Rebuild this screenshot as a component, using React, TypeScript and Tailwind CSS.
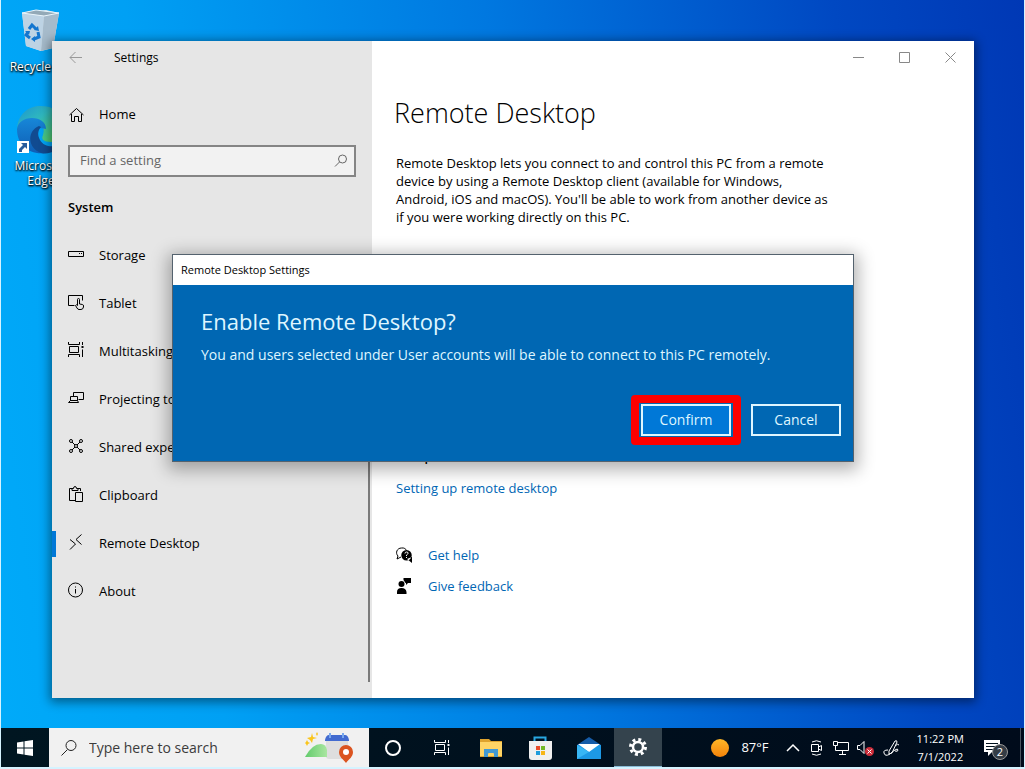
import { useState } from "react";
import type { ReactNode } from "react";

const sidebarItems = [
  { name: "Storage", icon: <StorageIcon /> },
  { name: "Tablet", icon: <TabletIcon /> },
  { name: "Multitasking", icon: <TaskViewIcon /> },
  { name: "Projecting to this PC", icon: <ProjectIcon /> },
  { name: "Shared experiences", icon: <ShareIcon /> },
  { name: "Clipboard", icon: <ClipboardIcon /> },
  { name: "Remote Desktop", icon: <RemoteIcon /> },
  { name: "About", icon: <AboutIcon /> },
];

function LineIcon({ children }: { children: ReactNode }) {
  return (
    <svg
      className="w-4 h-4 shrink-0"
      viewBox="0 0 16 16"
      fill="none"
      stroke="currentColor"
      aria-hidden="true"
    >
      {children}
    </svg>
  );
}

function StorageIcon() {
  return (
    <LineIcon>
      <path d="M.5 5.500h15v5H.5zM11 7.500h1M13 7.500h1" />
    </LineIcon>
  );
}

function TabletIcon() {
  return (
    <LineIcon>
      <path d="M6.500 11.500h-6v-10h14v5" />
      <path d="M9.500 11V5.500a1 1 0 0 1 2 0V10l3 .5q1 .2 1 1.500v1q-.5 2.500-2.500 2.500h-2q-1.200 0-2-1.500l-1.500-2.500q.8-1.500 2 0z" />
    </LineIcon>
  );
}

function TaskViewIcon() {
  return (
    <LineIcon>
      <path d="M1.500 4.500h9v6h-9zM.5 0v2.500h11V0M.5 15v-2.500h11V15M14.500 0v3M14.500 7.500V15" />
      <path d="M13.500 4h2v2h-2z" fill="currentColor" stroke="none" />
    </LineIcon>
  );
}

function ProjectIcon() {
  return (
    <LineIcon>
      <path d="M5.500 6V2.500h10v7h-5M2.500 6.500h7v4h-7zM.5 12.500h10l-1-2h-7z" />
    </LineIcon>
  );
}

function ShareIcon() {
  return (
    <LineIcon>
      <circle cx="8" cy="8" r="1.500" />
      <circle cx="3" cy="3" r="1.500" />
      <circle cx="13" cy="3" r="1.500" />
      <circle cx="3" cy="13" r="1.500" />
      <circle cx="13" cy="13" r="1.500" />
      <path d="m4 4 3 3M12 4 9 7M4 12l3-3M12 12 9 9" />
    </LineIcon>
  );
}

function ClipboardIcon() {
  return (
    <LineIcon>
      <path d="M7 14.500H1.500v-12H4M10 2.500h2.500V5M4 4.500v-2h1.500q0-2 1.500-2t1.500 2H10v2zM7.500 6.500h7v9h-7z" />
    </LineIcon>
  );
}

function RemoteIcon() {
  return (
    <LineIcon>
      <path d="M2 5.500 7.500 10 2 15.500M13.500.5 8 5.500l5.500 5" />
    </LineIcon>
  );
}

function AboutIcon() {
  return (
    <LineIcon>
      <circle cx="7.500" cy="8" r="7" />
      <path d="M7.500 7v4.500M7.500 4.500v1" />
    </LineIcon>
  );
}

function RecycleBinIcon() {
  return (
    <svg className="w-10 h-12" viewBox="0 0 40 48" aria-hidden="true">
      <path d="M1 6 25 3l13 3-6 35-12 3-15-5z" fill="#dce7ef" />
      <path d="m1 6 22 3-3 35-15-5z" fill="#bdd3e4" />
      <path d="m23 9 15-3-6 35-12 3z" fill="#a6bbcb" />
      <path d="m1 6 14-3 23 3-15 3z" fill="#93a9b7" stroke="#e8f4fb" />
      <g fill="none" stroke="#1376cf" strokeWidth="3">
        <path d="m8 22 3-4 4 4M17 25l1 5-5 2M9 31l-4-3 2-3" />
      </g>
      <path d="m13 23 5 1-1-5zM14 29v6l-4-3zM4 24h5l-1 4z" fill="#1376cf" />
    </svg>
  );
}

function EdgeIcon() {
  return (
    <svg className="w-12 h-12" viewBox="0 0 48 48" aria-hidden="true">
      <defs>
        <linearGradient id="edgeTop" x1="0" y1="0" x2="1" y2="1">
          <stop stopColor="#1b93d0" />
          <stop offset=".4" stopColor="#30b9be" />
          <stop offset="1" stopColor="#60d750" />
        </linearGradient>
        <linearGradient id="edgeLeft" x2="0" y2="1">
          <stop stopColor="#1787d8" />
          <stop offset="1" stopColor="#0f5eb5" />
        </linearGradient>
      </defs>
      <path d="M0 23C1 8 11 0 24 0c16 0 24 11 24 23 0 8-6 13-14 13-8 0-10-3-8-7 3-9-3-16-12-16C7 13 2 17 0 23z" fill="url(#edgeTop)" />
      <path d="M0 23c1-7 7-11 15-11 8 0 14 4 14 11-6-2-12 0-13 8-1 7 4 13 12 16C12 49 0 39 0 23z" fill="url(#edgeLeft)" />
      <path d="M22 20c-12 5-12 22 2 27 8 2 16-2 21-9-9 4-18 3-22-4-3-5-2-10 1-13z" fill="#114b91" />
    </svg>
  );
}

function DesktopIcons() {
  return (
    <div className="w-20 text-center text-xs leading-[15px] text-white [text-shadow:1px_1px_2px_#000,0_1px_2px_#000]">
      <a href="#recycle-bin" className="flex flex-col items-center pt-[7px]">
        <RecycleBinIcon />
        <span className="whitespace-nowrap pt-1">Recycle Bin</span>
      </a>
      <a href="#edge" className="relative flex flex-col items-center pt-8">
        <EdgeIcon />
        <svg
          className="absolute left-4 top-[67px] w-3 h-3 bg-white"
          viewBox="0 0 12 12"
          aria-hidden="true"
        >
          <path d="M4 2h6v6L8 6 5 9v2H2V8l4-4z" fill="#285c9b" />
        </svg>
        <span className="pt-1">Microsoft Edge</span>
      </a>
    </div>
  );
}

function Sidebar() {
  const [active, setActive] = useState("Remote Desktop");

  return (
    <aside className="w-80 shrink-0 relative flex flex-col bg-[#e6e6e6] text-black">
      <div className="flex items-center h-[33px] pl-4">
        <button aria-label="Back" className="text-[#999]">
          <svg className="w-4 h-4" viewBox="0 0 16 16" fill="none" stroke="currentColor">
            <path d="M14 7.500H2M7.500 2 2 7.500 7.500 13" />
          </svg>
        </button>
        <span className="pl-[30px] text-xs">Settings</span>
      </div>
      <a href="#home" className="flex items-center gap-[15px] h-12 mt-[17px] pl-4">
        <LineIcon>
          <path d="M1.500 8 8.500 1.500l7 6.500M3.500 7v7.500h3v-5h4v5h3V7" />
        </LineIcon>
        Home
      </a>
      <label className="flex items-center h-8 mx-4 mt-1.5 pl-2.5 pr-1.5 border-2 border-[#858585] bg-[#f2f2f2]">
        <input
          type="text"
          aria-label="Find a setting"
          placeholder="Find a setting"
          className="flex-1 min-w-0 outline-none placeholder:text-[#666]"
        />
        <svg className="w-[14px] h-[14px] text-[#666]" viewBox="0 0 14 14" fill="none" stroke="currentColor">
          <circle cx="8.500" cy="5" r="4" />
          <path d="M5.500 8 1 12.500" />
        </svg>
      </label>
      <h2 className="pl-4 pt-5 leading-5 font-semibold">System</h2>
      <nav className="pt-[15px]">
        {sidebarItems.map((item) => (
          <button
            key={item.name}
            onClick={() => setActive(item.name)}
            className={`w-full h-12 pl-3 flex items-center gap-[15px] border-l-4 text-left ${
              active === item.name
                ? "[border-image:linear-gradient(transparent_25%,#0078d7_25%,#0078d7_75%,transparent_75%)_1]"
                : "border-transparent"
            }`}
          >
            <span className="pb-1">{item.icon}</span>
            {item.name}
          </button>
        ))}
      </nav>
      {/* Scrollbar */}
      <div className="absolute right-0.5 top-60 bottom-4 w-0.5 bg-[#7a7a7a]" />
    </aside>
  );
}

function SettingsContent() {
  return (
    <main className="flex-1 min-w-0 flex flex-col bg-white text-black">
      <div className="flex justify-end h-8 pr-px text-[#888]">
        <button aria-label="Minimize" className="w-[46px] flex items-center justify-center">
          <svg className="w-[11px] h-[11px]" viewBox="0 0 11 11" stroke="currentColor">
            <path d="M0 5.500h11" />
          </svg>
        </button>
        <button aria-label="Maximize" className="w-[46px] flex items-center justify-center">
          <svg className="w-[11px] h-[11px]" viewBox="0 0 11 11" fill="none" stroke="currentColor">
            <path d="M.5.5h10v10H.5z" />
          </svg>
        </button>
        <button aria-label="Close" className="w-[46px] flex items-center justify-center">
          <svg className="w-[11px] h-[11px]" viewBox="0 0 11 11" stroke="currentColor">
            <path d="m.5.5 10 10M10.500.5l-10 10" />
          </svg>
        </button>
      </div>
      <h1 className="pl-[22px] pt-5 text-[27px] leading-10 font-light">Remote Desktop</h1>
      <p className="pl-6 pt-[21px] max-w-[480px] leading-[18px]">
        Remote Desktop lets you connect to and control this PC from a remote
        <br />
        device by using a Remote Desktop client (available for Windows,
        <br />
        Android, iOS and macOS). You'll be able to work from another device as
        <br />
        if you were working directly on this PC.
      </p>
      <h2 className="pl-6 pt-[213px] pb-[11px] text-lg leading-7">
        Help from the web
      </h2>
      <div className="pl-6 flex flex-col items-start text-[#0066b4]">
        <a href="#setup" className="leading-5">
          Setting up remote desktop
        </a>
        <a href="#help" className="flex items-center gap-4 mt-[47px] leading-5">
          <svg className="w-4 h-4" viewBox="0 0 16 16" aria-hidden="true">
            <path d="M5 10 1 12l1-3C-1 6 1 1 5.500 1 8 .5 10 2 10.500 3.500" fill="none" stroke="#000" />
            <path d="M10.500 3a5 5 0 1 1 0 10.500 5 5 0 0 1 0-10.500zM11 12l5 4v-6z" fill="#000" />
            <path d="M9 6.500Q9 5 10.500 5q2 0 1.500 1.500Q12 7 10.500 8v1M10.500 10v1" fill="none" stroke="#fff" />
          </svg>
          Get help
        </a>
        <a href="#feedback" className="flex items-center gap-4 mt-[11px] leading-5">
          <svg className="w-4 h-4" viewBox="0 0 16 16" fill="#000" aria-hidden="true">
            <circle cx="5.500" cy="6" r="3" />
            <path d="M1 16v-2q0-4 4.500-4t5 4v2zM7.500 0H15v5h-3l-2 2V5H9.500L7.500 2z" />
          </svg>
          Give feedback
        </a>
      </div>
    </main>
  );
}

function EnableDialog({ onClose }: { onClose: () => void }) {
  return (
    <section
      role="dialog"
      aria-labelledby="dialog-title"
      className="absolute left-[120px] right-[120px] top-[213px] border border-[#54626e] bg-[#0067b3] text-[#dff6ff] shadow-[0_4px_16px_4px_rgba(0,0,0,0.3)]"
    >
      <div className="h-[30px] px-2 flex items-center bg-white text-black text-[11px]">
        Remote Desktop Settings
      </div>
      <div className="pl-7 pt-5">
        <h2 id="dialog-title" className="text-[22px] leading-8">
          Enable Remote Desktop?
        </h2>
        <p className="pt-2 text-sm leading-5">
          You and users selected under User accounts will be able to connect to
          this PC remotely.
        </p>
      </div>
      <div className="flex justify-end items-center gap-2.5 pt-[30px] pr-3 pb-4 text-sm">
        <div className="border-[8px] border-[#fe0000] rounded-sm px-0.5 py-px">
          <button
            onClick={onClose}
            className="block w-[90px] h-8 border-2 border-[#dff6ff] bg-[#0078d7]"
          >
            Confirm
          </button>
        </div>
        <button onClick={onClose} className="w-[90px] h-8 border-2 border-[#dff6ff]">
          Cancel
        </button>
      </div>
    </section>
  );
}

function SearchArt() {
  return (
    <svg className="w-12 h-8" viewBox="0 0 48 32" aria-hidden="true">
      <defs>
        <linearGradient id="hill">
          <stop stopColor="#62cb6c" />
          <stop offset="1" stopColor="#a9e6a0" />
        </linearGradient>
      </defs>
      <path d="M21 8h22v19H24q-3 0-3-3z" fill="#dedede" />
      <path d="M0 25Q7 12 16 12q5 0 6 6v7z" fill="url(#hill)" />
      <path d="M20 8q1-5 4-5h16q3 0 4 5v1H20z" fill="#426bd0" />
      <path d="M25 1v5M38 1v5" stroke="#79a8ed" strokeWidth="2" />
      <path d="m7 1 1 4 4 1-4 1-1 4-2-3-3-2 4-1zM2 8l1 2 2 1-2 1-1 2-1-2-1-1 1-1zM12 0l1 2-1 2-1-2z" fill="#fac51c" />
      <path d="M41 31c-3-4-7-6-7-11a7 7 0 0 1 14 0c0 5-4 7-7 11z" fill="#db5420" />
      <circle cx="41" cy="20" r="3" fill="#fff" />
    </svg>
  );
}

function TaskButton({
  label,
  active,
  children,
}: {
  label: string;
  active?: boolean;
  children: ReactNode;
}) {
  return (
    <button
      aria-label={label}
      className={`w-12 shrink-0 flex items-center justify-center ${
        active ? "bg-[#34434d] border-b border-[#8bbbd5]" : ""
      }`}
    >
      {children}
    </button>
  );
}

function Taskbar() {
  return (
    <footer className="h-[39px] shrink-0 flex bg-gradient-to-r from-[#001621] to-[#000b1b] text-white">
      <TaskButton label="Start">
        <svg className="w-4 h-4" viewBox="0 0 16 16" fill="#fff">
          <path d="M0 2.500 6.500 1.500v6H0zM7.500 1.300 16 0v7.500H7.500zM0 8.500h6.500v6L0 13.500zM7.500 8.500H16V16l-8.500-1.300z" />
        </svg>
      </TaskButton>
      <label className="w-80 shrink-0 flex items-center pl-3 pr-4 bg-[#f1f1f1] text-[#222]">
        <svg className="w-4 h-4" viewBox="0 0 16 16" fill="none" stroke="currentColor">
          <circle cx="10" cy="5.500" r="5" />
          <path d="M6.500 9.500.5 15.500" />
        </svg>
        <input
          type="text"
          aria-label="Type here to search"
          placeholder="Type here to search"
          className="flex-1 min-w-0 pl-3 text-sm outline-none placeholder:text-[#3c3c3c]"
        />
        <SearchArt />
      </label>
      <div className="flex gap-px">
        <TaskButton label="Cortana">
          <svg className="w-4 h-4" viewBox="0 0 16 16" fill="none" stroke="#fff" strokeWidth="2">
            <circle cx="8" cy="8" r="7" />
          </svg>
        </TaskButton>
        <TaskButton label="Task View">
          <TaskViewIcon />
        </TaskButton>
        <TaskButton label="File Explorer">
          <svg className="w-6 h-5" viewBox="0 0 24 20">
            <path d="M1 1h9l2 2h11v16H1z" fill="#dfa32d" />
            <path d="M1 4h22v14H1z" fill="#ffd465" />
            <path d="M5 11h14v8h-4v-3q0-1-1-1h-4q-1 0-1 1v3H5z" fill="#4299d3" />
          </svg>
        </TaskButton>
        <TaskButton label="Microsoft Store">
          <svg className="w-6 h-6" viewBox="0 0 24 24">
            <path d="M6.500 7V1.500h11V7" fill="none" stroke="#28a7e1" strokeWidth="2" />
            <path d="M1 5h23v16q0 3-3 3H4q-3 0-3-3z" fill="#f0f0f0" />
            <path d="M8 10h4v4H8z" fill="#e84b29" />
            <path d="M13 10h4v4h-4z" fill="#73b927" />
            <path d="M8 15h4v4H8z" fill="#209cdb" />
            <path d="M13 15h4v4h-4z" fill="#f7b617" />
          </svg>
        </TaskButton>
        <TaskButton label="Mail">
          <svg className="w-6 h-6" viewBox="0 0 24 24">
            <path d="m0 9 12-8 12 8z" fill="#155ca9" />
            <path d="M0 9h24v14H0z" fill="#1d99e5" />
            <path d="M1 8h22L12 16z" fill="#fff" />
            <path d="m0 9 12 7-12 7z" fill="#38b6f5" />
          </svg>
        </TaskButton>
        <TaskButton label="Settings" active>
          <svg className="w-5 h-5" viewBox="0 0 20 20" fill="none" stroke="#fff">
            <circle cx="10" cy="10" r="5" strokeWidth="2.500" />
            <circle cx="10" cy="10" r="7.500" strokeWidth="3" strokeDasharray="2.950" />
          </svg>
        </TaskButton>
      </div>
      <div className="flex-1 flex items-center justify-end">
        <button className="flex items-center gap-3">
          <span className="w-[18px] h-[18px] rounded-full bg-gradient-to-b from-[#ffb727] to-[#f38208]" />
          87°F
        </button>
        <div className="flex items-center gap-2 pl-4">
          <button aria-label="Show hidden icons">
            <svg className="w-4 h-4" viewBox="0 0 16 16" fill="none" stroke="#fff">
              <path d="m2 11 6-6 6 6" strokeWidth="1.500" />
            </svg>
          </button>
          <button aria-label="Meet Now">
            <LineIcon>
              <path d="M2.500 4.500h7v7h-7zM9.500 7l3-1.500v5L9.500 9M3 2q4.500-2.500 9 0M3 14q4.500 2.500 9 0" />
            </LineIcon>
          </button>
          <button aria-label="Network">
            <LineIcon>
              <path d="M5 2.500h10.500v8H2.500M9.500 10.500v4M6 14.500h7M.5 1.500h4v4h-4zM2.500 5.500v5" />
            </LineIcon>
          </button>
          <button aria-label="Volume muted">
            <svg className="w-[18px] h-4" viewBox="0 0 18 16" fill="none" stroke="#fff">
              <path d="M.5 5.500H3l4-4v12l-4-4H.5z" />
              <circle cx="12.500" cy="11.500" r="4.500" fill="#cc2c39" stroke="none" />
              <path d="m10.500 9.500 4 4M14.500 9.500l-4 4" />
            </svg>
          </button>
          <button aria-label="Windows Ink">
            <svg className="w-[18px] h-[18px]" viewBox="0 0 18 18" fill="none" stroke="#fff">
              <path d="m6 12 6-10q2-1 2 1L9 14l-3 1zM5 11q-5 0-4 3 1 4 6 1 3-3 5-4 3-2 3 0 0 2-3 1M12 7q3-3 4-1" />
            </svg>
          </button>
        </div>
        <button className="pl-4 text-center text-[11px] leading-[18px] whitespace-nowrap">
          11:22 PM
          <br />
          7/1/2022
        </button>
        <button aria-label="2 notifications" className="relative w-6 h-6 ml-5 mr-3">
          <svg className="w-4 h-4" viewBox="0 0 16 16" fill="#fff">
            <path d="M0 0h16v12H8l-4 4v-4H0z" />
            <path d="M2 3.500h12M2 6.500h12M2 9.500h8" stroke="#00101d" />
          </svg>
          <span className="absolute right-0 bottom-0 w-4 h-4 rounded-full border border-[#999] bg-[#343c45] text-[11px] leading-[14px]">
            2
          </span>
        </button>
        {/* Show desktop */}
        <button aria-label="Show desktop" className="w-1 h-full border-l border-[#4a5560]" />
      </div>
    </footer>
  );
}

function App() {
  const [open, setOpen] = useState(true);

  return (
    <div className="h-screen pl-px pr-px pb-0.5 flex flex-col bg-[#d5f3ff] font-['Open_Sans','Noto_Sans',sans-serif] text-[13px]">
      <div className="relative flex-1 min-h-0 overflow-hidden bg-[linear-gradient(82deg,#00aaf9_0%,#00a0f4_20%,#0078e0_52%,#0048c2_83%,#0038b5_100%)]">
        <DesktopIcons />
        <div className="absolute left-[51px] right-[50px] top-[41px] bottom-[30px] flex shadow-[0_2px_10px_2px_rgba(0,0,0,0.45)]">
          <Sidebar />
          <SettingsContent />
          {open && <EnableDialog onClose={() => setOpen(false)} />}
        </div>
      </div>
      <Taskbar />
    </div>
  );
}

export default App;
